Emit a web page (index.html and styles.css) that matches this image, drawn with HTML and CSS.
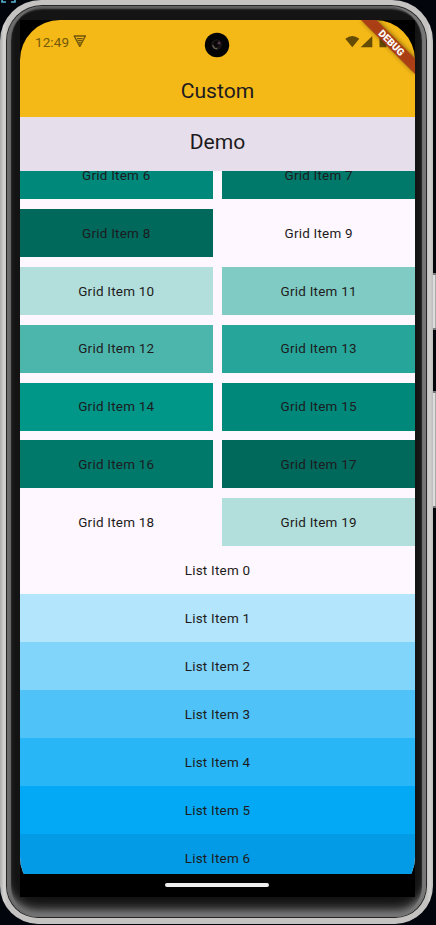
FILE: index.html
```html
<!DOCTYPE html>
<html lang="en">
<head>
<meta charset="utf-8">
<title>Custom</title>
<link rel="stylesheet" href="styles.css">
</head>
<body>
<svg class="desktop-mark" width="20" height="6" viewBox="0 0 20 6"><path d="M2 0v2h4M11 2h4v-2" fill="none" stroke="#5ab4d6" stroke-width="1.6"/></svg>
<i class="side-button power"></i>
<i class="side-button volume"></i>
<div class="shell">
  <div class="rim">
    <div class="bezel">
      <div class="panel">
      <div class="screen">
        <header class="app-bar">
          <div class="status">
            <span class="clock">12:49</span>
            <svg class="vpn" width="14" height="13" viewBox="0 0 14 13"><path d="M1.2 1h11.2L6.8 11.3z" fill="none" stroke="#6f5609" stroke-width="1.4" stroke-linejoin="round"/><path d="M4 3h5.6v1.2H4zM4.7 5h4.2v1.3H4.7zM5.6 7h2.4L6.8 9.3z" fill="#6f5609"/></svg>
            <svg class="signals" width="46" height="14" viewBox="0 0 46 14"><path d="M.3 3.7Q7.3-1.8 14.3 3.7L7.3 12.2z" fill="#654c05"/><path d="M27.3 1v11.2H15.7z" fill="#654c05"/><path d="M34.5 2h2V1h3v1h2v10.2h-7z" fill="#654c05"/></svg>
          </div>
          <h1 class="title">Custom</h1>
        </header>
        <h2 class="pinned title">Demo</h2>
        <main class="viewport">
          <div class="grid">
            <div class="cell t6">Grid Item 6</div><div class="cell t7">Grid Item 7</div>
            <div class="cell t8">Grid Item 8</div><div class="cell">Grid Item 9</div>
            <div class="cell t1">Grid Item 10</div><div class="cell t2">Grid Item 11</div>
            <div class="cell t3">Grid Item 12</div><div class="cell t4">Grid Item 13</div>
            <div class="cell t5">Grid Item 14</div><div class="cell t6">Grid Item 15</div>
            <div class="cell t7">Grid Item 16</div><div class="cell t8">Grid Item 17</div>
            <div class="cell">Grid Item 18</div><div class="cell t1">Grid Item 19</div>
          </div>
          <div class="list">
            <div class="row">List Item 0</div>
            <div class="row b1">List Item 1</div>
            <div class="row b2">List Item 2</div>
            <div class="row b3">List Item 3</div>
            <div class="row b4">List Item 4</div>
            <div class="row b5">List Item 5</div>
            <div class="row b6">List Item 6</div>
          </div>
        </main>
        <footer class="nav"><i class="handle"></i></footer>
        <svg class="camera" width="26" height="26" viewBox="0 0 26 26"><circle cx="13" cy="13" r="12.2" fill="#050404"/><circle cx="12.5" cy="12.5" r="5.3" fill="#1b1616"/><path d="M8.8 13q.6 4 4.6 3.6" fill="none" stroke="#696259" stroke-width="1.3"/><circle cx="12.8" cy="11.8" r="3" fill="#090707"/><circle cx="15" cy="11" r="1.5" fill="#54384f"/></svg>
      </div>
        <svg class="ribbon" width="60" height="60" viewBox="0 0 60 60">
          <defs><filter id="soft" x="-20%" y="-20%" width="140%" height="140%"><feGaussianBlur stdDeviation="2"/></filter></defs>
          <path d="M6 0h17l37 37v17z" fill="#000" opacity=".4" filter="url(#soft)"/>
          <path d="M6 0h15.5L60 38.500V54z" fill="#ab3a15" opacity=".93"/>
          <text x="36.6" y="22.8" transform="rotate(45 36.6 22.8)" text-anchor="middle" dominant-baseline="central">DEBUG</text>
        </svg>
      </div>
    </div>
  </div>
</div>
</body>
</html>
```
FILE: styles.css
```css
* { box-sizing: border-box; }
body {
  position: relative;
  margin: 0;
  width: 436px;
  height: 925px;
  overflow: hidden;
  background: #02050b;
  font-family: Roboto, sans-serif;
  color: #1d1b20;
}
.desktop-mark { position: absolute; left: 0; top: 0; }
.side-button {
  position: absolute;
  left: 432px;
  width: 8px;
  background: linear-gradient(90deg, #555 0 1px, #ddd 1px 3px, #aaa 3px);
  border-block: 2px solid #777;
}
.power { top: 273px; height: 57px; }
.volume { top: 391px; height: 117px; }
.shell {
  position: relative;
  width: 433px;
  height: 924px;
  padding: 5px 6px 6px 6px;
  border-radius: 41px 41px 38px 38px;
  background: linear-gradient(90deg, #aaa, #d4d3d2 4px, #c4c3c2 7px, #c4c3c2 427px, #d1d0cf 430px, #bbb);
}
.rim {
  height: 100%;
  padding: 1px;
  border-radius: 36px 36px 32px 32px;
  background: #252525;
}
.bezel {
  height: 100%;
  padding: 14px 11px 20px 13px;
  border-radius: 35px 35px 31px 31px;
  background: #141414;
  box-shadow:
    inset 4px 0 1px #6c6c6c,
    inset -4px 0 1px #777,
    inset 0 3px 2px #606060,
    inset 0 -5px 5px #777,
    inset 0 -10px 8px #555;
}
.panel {
  position: relative;
  width: 395px;
  height: 877px;
  overflow: hidden;
  background: #000;
}
.screen {
  position: relative;
  display: flex;
  flex-direction: column;
  height: 100%;
  overflow: hidden;
  border-radius: 40px;
  background: #000;
}
.app-bar { height: 97.3px; flex: none; background: #f4b817; }
.status {
  display: flex;
  align-items: center;
  height: 43px;
  padding: 0 9px 0 15px;
}
.clock { font-size: 13.5px; letter-spacing: .1px; color: #735909; }
.vpn { margin-left: 4px; }
.signals { margin-left: auto; margin-right: 15px; }
.title {
  display: flex;
  align-items: center;
  justify-content: center;
  margin: 0;
  font-size: 21.1px;
  font-weight: 400;
}
.app-bar .title { height: 54px; }
.pinned {
  flex: none;
  height: 53.7px;
  padding-bottom: 5px;
  background: #e6dfeb;
}
.viewport { height: 702.7px; flex: none; overflow: hidden; background: #fef7ff; }
.grid {
  display: grid;
  grid-template-columns: 1fr 1fr;
  grid-auto-rows: 48px;
  gap: 9.8px;
  margin-top: -19.5px;
}
.cell, .row {
  display: flex;
  align-items: center;
  justify-content: center;
  font-size: 13.45px;
  letter-spacing: .24px;
}
.row { height: 48px; }
.t1 { background: #b2dfdb; }
.t2 { background: #80cbc4; }
.t3 { background: #4db6ac; }
.t4 { background: #26a69a; }
.t5 { background: #009688; }
.t6 { background: #00897b; }
.t7 { background: #00796b; }
.t8 { background: #00695c; }
.b1 { background: #b3e5fc; }
.b2 { background: #81d4fa; }
.b3 { background: #4fc3f7; }
.b4 { background: #29b6f6; }
.b5 { background: #03a9f4; }
.b6 { background: #039be5; }
.nav { flex: 1; display: flex; justify-content: center; padding: 9px 1px 0 0; }
.handle { width: 104px; height: 4px; border-radius: 2px; background: #eee; }
.camera { position: absolute; left: 184px; top: 11.5px; }
.ribbon { position: absolute; right: 0; top: 0; }
.ribbon text { font: 900 10px Roboto, sans-serif; fill: #fff; }
```
